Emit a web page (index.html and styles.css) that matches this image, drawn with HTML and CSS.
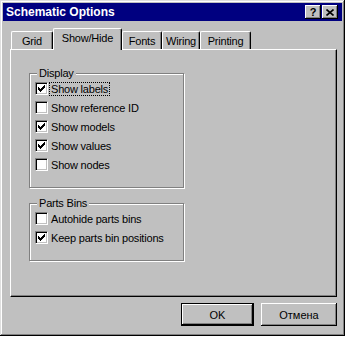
FILE: index.html
```html
<!DOCTYPE html>
<html lang="en">
<head>
    <meta charset="UTF-8">
    <title>Schematic Options</title>
    <link rel="stylesheet" href="styles.css">
</head>
<body>

<div class="window">
    <div class="titlebar">
        <span class="title">Schematic Options</span>
        <div class="title-buttons">
            <span class="tbtn help">?</span>
            <span class="tbtn close">
                <svg width="8" height="7" viewBox="0 0 8 7"><path d="M0.5 0.5 L7.5 6.5 M7.5 0.5 L0.5 6.5" stroke="#000" stroke-width="1.6"/></svg>
            </span>
        </div>
    </div>

    <div class="tabs">
        <div class="tab tab-grid">Grid</div>
        <div class="tab tab-show active">Show/Hide</div>
        <div class="tab tab-fonts">Fonts</div>
        <div class="tab tab-wiring">Wiring</div>
        <div class="tab tab-printing">Printing</div>
    </div>

    <div class="panel">
        <fieldset class="group">
            <legend>Display</legend>
            <label class="check"><span class="box checked"></span><span class="text focus">Show labels</span></label>
            <label class="check"><span class="box"></span><span class="text">Show reference ID</span></label>
            <label class="check"><span class="box checked"></span><span class="text">Show models</span></label>
            <label class="check"><span class="box checked"></span><span class="text">Show values</span></label>
            <label class="check"><span class="box"></span><span class="text">Show nodes</span></label>
        </fieldset>

        <fieldset class="group parts">
            <legend>Parts Bins</legend>
            <label class="check"><span class="box"></span><span class="text">Autohide parts bins</span></label>
            <label class="check"><span class="box checked"></span><span class="text">Keep parts bin positions</span></label>
        </fieldset>
    </div>

    <div class="buttons">
        <div class="btn btn-ok default">OK</div>
        <div class="btn btn-cancel">Отмена</div>
    </div>
</div>

</body>
</html>
```

FILE: styles.css
```css
/* Win95 style dialog */
* {
    box-sizing: border-box;
}

body {
    margin: 0;
    background-color: #fff;
    font-family: "Liberation Sans", Arial, sans-serif;
    font-size: 11px;
    color: #000;
}

.window {
    width: 345px;
    height: 336px;
    padding: 3px;
    background-color: #c0c0c0;
    box-shadow: inset -1px -1px #000, inset 1px 1px #dfdfdf,
                inset -2px -2px #808080, inset 2px 2px #fff;
    display: flex;
    flex-direction: column;
}

/* Title bar */
.titlebar {
    height: 18px;
    background-color: #000080;
    color: #fff;
    display: flex;
    align-items: center;
    justify-content: space-between;
    padding: 0 4px 0 3px;
}

.title {
    font-weight: bold;
    font-size: 12px;
}

.title-buttons {
    display: flex;
    gap: 1px;
}

.tbtn {
    width: 16px;
    height: 14px;
    background-color: #c0c0c0;
    box-shadow: inset -1px -1px #000, inset 1px 1px #fff, inset -2px -2px #808080;
    display: flex;
    align-items: center;
    justify-content: center;
    color: #000;
    font-weight: bold;
    font-size: 11px;
    line-height: 1;
}

/* Tabs */
.tabs {
    display: flex;
    align-items: flex-end;
    height: 21px;
    margin: 7px 0 0 8px;
    position: relative;
    z-index: 1;
}

.tab {
    height: 18px;
    border: 1px solid #fff;
    border-bottom: none;
    border-right-color: #000;
    border-radius: 2px 2px 0 0;
    box-shadow: inset -1px 0 #808080;
    display: flex;
    align-items: center;
    justify-content: center;
    letter-spacing: -0.2px;
}

.tab.active {
    height: 22px;
    margin-bottom: -1px;
    padding-bottom: 3px;
    background-color: #c0c0c0;
}

.tab-grid { width: 42px; }
.tab-show { width: 69px; }
.tab-fonts { width: 40px; }
.tab-wiring { width: 38px; }
.tab-printing { width: 51px; }

/* Tab page */
.panel {
    width: 327px;
    height: 248px;
    margin-left: 7px;
    padding: 17px 0 0 18px;
    border: 1px solid;
    border-color: #fff #000 #000 #fff;
    box-shadow: inset -1px -1px #808080;
}

/* Group boxes */
.group {
    width: 155px;
    margin: 0;
    padding: 0 0 13px 5px;
    border: 1px solid #808080;
    box-shadow: inset 1px 1px #fff, 1px 1px #fff;
}

.group legend {
    padding: 0 2px;
    margin-left: 2px;
    line-height: 12px;
    background-color: #c0c0c0;
    letter-spacing: -0.2px;
}

.parts {
    margin-top: 9px;
}

/* Checkboxes */
.check {
    display: flex;
    align-items: center;
    height: 19px;
}

.box {
    width: 13px;
    height: 13px;
    margin-right: 1px;
    background-color: #fff;
    border: 1px solid;
    border-color: #808080 #fff #fff #808080;
    box-shadow: inset 1px 1px #000, inset -1px -1px #c0c0c0;
    position: relative;
}

.box.checked::after {
    content: "";
    position: absolute;
    left: 2px;
    top: 2px;
    width: 7px;
    height: 7px;
    background:
        linear-gradient(#000, #000) 0 2px / 1px 3px no-repeat,
        linear-gradient(#000, #000) 1px 3px / 1px 3px no-repeat,
        linear-gradient(#000, #000) 2px 4px / 1px 3px no-repeat,
        linear-gradient(#000, #000) 3px 3px / 1px 3px no-repeat,
        linear-gradient(#000, #000) 4px 2px / 1px 3px no-repeat,
        linear-gradient(#000, #000) 5px 1px / 1px 3px no-repeat,
        linear-gradient(#000, #000) 6px 0 / 1px 3px no-repeat;
}

.text {
    padding: 0 1px;
    border: 1px dotted transparent;
    line-height: 12px;
    letter-spacing: -0.2px;
}

.text.focus {
    border-color: #000;
}

/* Dialog buttons */
.buttons {
    display: flex;
    justify-content: flex-end;
    gap: 7px;
    margin-top: 6px;
    padding-right: 5px;
}

.btn {
    height: 23px;
    background-color: #c0c0c0;
    box-shadow: inset -1px -1px #000, inset 1px 1px #fff, inset -2px -2px #808080;
    display: flex;
    align-items: center;
    justify-content: center;
}

.btn.default {
    border: 1px solid #000;
}

.btn-ok { width: 73px; }
.btn-cancel { width: 76px; }
```
